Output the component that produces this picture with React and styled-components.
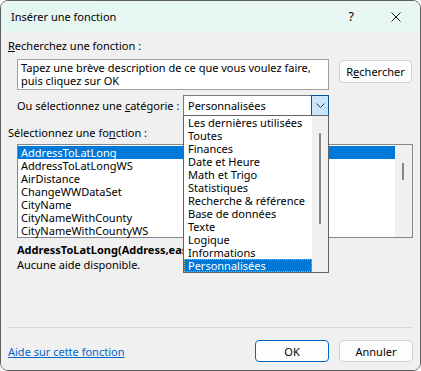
import React from "react";
import styled, { createGlobalStyle } from "styled-components";

const GlobalStyle = createGlobalStyle`
  html, body {
    margin: 0;
    padding: 0;
    background: #ffffff;
  }
  * {
    box-sizing: border-box;
  }
`;

const categories = [
  "Les dernières utilisées",
  "Toutes",
  "Finances",
  "Date et Heure",
  "Math et Trigo",
  "Statistiques",
  "Recherche & référence",
  "Base de données",
  "Texte",
  "Logique",
  "Informations",
  "Personnalisées",
];

const functions = [
  "AddressToLatLong",
  "AddressToLatLongWS",
  "AirDistance",
  "ChangeWWDataSet",
  "CityName",
  "CityNameWithCounty",
  "CityNameWithCountyWS",
];

export default function App() {
  return (
    <>
      <GlobalStyle />
      <Window>
        <TitleBar>
          <Title>Insérer une fonction</Title>
          <TitleButtons>
            <HelpGlyph>?</HelpGlyph>
            <CloseIcon viewBox="0 0 10 10">
              <path d="M0.5 0.5 L9.5 9.5 M9.5 0.5 L0.5 9.5" />
            </CloseIcon>
          </TitleButtons>
        </TitleBar>
        <Body>
          <Label>
            <Key>R</Key>echerchez une fonction :
          </Label>
          <SearchRow>
            <SearchBox>
              Tapez une brève description de ce que vous voulez faire,
              <br />
              puis cliquez sur OK
            </SearchBox>
            <Button>
              R<Key>e</Key>chercher
            </Button>
          </SearchRow>
          <CategoryRow>
            <CategoryLabel>
              Ou sélectionnez une <Key>c</Key>atégorie :
            </CategoryLabel>
            <Combo>
              <ComboText>Personnalisées</ComboText>
              <ComboButton>
                <svg width="9" height="5" viewBox="0 0 9 5">
                  <path d="M0.5 0.5 L4.5 4.5 L8.5 0.5" fill="none" stroke="#333" strokeWidth="1" />
                </svg>
              </ComboButton>
              <DropList>
                <DropItems>
                  {categories.map((c, i) => (
                    <DropItem key={c} $selected={i === categories.length - 1}>
                      {c}
                    </DropItem>
                  ))}
                </DropItems>
                <ScrollTrack>
                  <Thumb style={{ top: 17, height: 91 }} />
                </ScrollTrack>
              </DropList>
            </Combo>
          </CategoryRow>
          <FunctionLabel>
            Sélectionnez une fo<Key>n</Key>ction :
          </FunctionLabel>
          <FunctionList>
            <FunctionItems>
              {functions.map((f, i) => (
                <FunctionItem key={f} $selected={i === 0}>
                  {f}
                </FunctionItem>
              ))}
            </FunctionItems>
            <ScrollTrack $wide>
              <Thumb style={{ top: 18, height: 17 }} />
            </ScrollTrack>
          </FunctionList>
          <Signature>AddressToLatLong(Address,easyName)</Signature>
          <HelpText>Aucune aide disponible.</HelpText>
          <Spacer />
          <Separator />
          <Footer>
            <Link href="#">Aide sur cette fonction</Link>
            <FooterButtons>
              <Button $default $wide>OK</Button>
              <Button $wide>Annuler</Button>
            </FooterButtons>
          </Footer>
        </Body>
      </Window>
    </>
  );
}

const Window = styled.div`
  width: 421px;
  height: 371px;
  border: 1px solid #5f5f5f;
  border-radius: 8px;
  overflow: hidden;
  display: flex;
  flex-direction: column;
  font-family: "Noto Sans", sans-serif;
  font-size: 11px;
  color: #000;
`;

const TitleBar = styled.div`
  height: 31px;
  flex: 0 0 auto;
  display: flex;
  align-items: center;
  justify-content: space-between;
  padding: 0 19px 0 10px;
  background: linear-gradient(90deg, #e5f6f2 0%, #e9f7f3 100%);
`;

const Title = styled.span`
  font-size: 11px;
`;

const TitleButtons = styled.div`
  display: flex;
  align-items: center;
  gap: 37px;
`;

const HelpGlyph = styled.span`
  font-size: 12.5px;
`;

const CloseIcon = styled.svg`
  width: 10px;
  height: 10px;
  stroke: #1a1a1a;
  stroke-width: 1;
  fill: none;
`;

const Body = styled.div`
  flex: 1;
  display: flex;
  flex-direction: column;
  background: #f0f0f0;
  padding: 6px 7px 8px 7px;
`;

const Key = styled.span`
  text-decoration: underline;
`;

const Label = styled.div`
  line-height: 15px;
  height: 15px;
`;

const SearchRow = styled.div`
  display: flex;
  align-items: flex-start;
  gap: 10px;
  margin: 6px 0 0 9px;
`;

const SearchBox = styled.div`
  width: 312px;
  height: 31px;
  background: #fff;
  border: 1px solid #a0a0a0;
  padding: 1px 3px;
  line-height: 13px;
  white-space: nowrap;
`;

const Button = styled.button`
  width: ${({ $wide }) => ($wide ? "74px" : "73px")};
  height: ${({ $wide }) => ($wide ? "22px" : "23px")};
  margin-top: ${({ $wide }) => ($wide ? "0" : "1px")};
  padding: 0;
  font-family: inherit;
  font-size: 11px;
  color: #000;
  background: #fdfdfd;
  border: 1px solid ${({ $default }) => ($default ? "#0067c0" : "#d0d0d0")};
  border-radius: 4px;
`;

const CategoryRow = styled.div`
  display: flex;
  align-items: center;
  margin: 5px 0 0 9px;
  height: 21px;
`;

const CategoryLabel = styled.div`
  width: 166px;
  white-space: nowrap;
`;

const Combo = styled.div`
  position: relative;
  width: 146px;
  height: 21px;
  background: #fff;
  border: 1px solid #7a7a7a;
  display: flex;
  align-items: center;
`;

const ComboText = styled.span`
  flex: 1;
  padding-left: 4px;
`;

const ComboButton = styled.div`
  width: 18px;
  height: 21px;
  margin: -1px -1px -1px 0;
  background: #cce4f7;
  border: 1px solid #005499;
  display: flex;
  align-items: center;
  justify-content: center;
`;

const DropList = styled.div`
  position: absolute;
  top: 19px;
  left: -1px;
  width: 146px;
  height: 158px;
  background: #fff;
  border: 1px solid #646464;
  display: flex;
  z-index: 2;
`;

const DropItems = styled.div`
  flex: 1;
  display: flex;
  flex-direction: column;
`;

const DropItem = styled.div`
  height: 13px;
  line-height: 13px;
  padding-left: 4px;
  white-space: nowrap;
  background: ${({ $selected }) => ($selected ? "#0078d7" : "transparent")};
  color: ${({ $selected }) => ($selected ? "#fff" : "#000")};
  outline: ${({ $selected }) => ($selected ? "1px dotted #e8a040" : "none")};
  outline-offset: -1px;
`;

const ScrollTrack = styled.div`
  position: relative;
  width: ${({ $wide }) => ($wide ? "17px" : "16px")};
  background: #f0f0f0;
`;

const Thumb = styled.div`
  position: absolute;
  left: 7px;
  width: 2px;
  background: #858585;
`;

const FunctionLabel = styled.div`
  margin-top: 9px;
  line-height: 15px;
`;

const FunctionList = styled.div`
  margin: 4px 0 0 9px;
  height: 94px;
  background: #fff;
  border: 1px solid #828790;
  display: flex;
`;

const FunctionItems = styled.div`
  flex: 1;
  padding-top: 1px;
  display: flex;
  flex-direction: column;
`;

const FunctionItem = styled.div`
  height: 13px;
  line-height: 13px;
  padding-left: 3px;
  background: ${({ $selected }) => ($selected ? "#0078d7" : "transparent")};
  color: ${({ $selected }) => ($selected ? "#fff" : "#000")};
`;

const Signature = styled.div`
  margin: 4px 0 0 9px;
  width: 166px;
  overflow: hidden;
  line-height: 15px;
  font-weight: bold;
  white-space: nowrap;
`;

const HelpText = styled.div`
  margin-left: 9px;
  line-height: 16px;
`;

const Spacer = styled.div`
  flex: 1;
`;

const Separator = styled.div`
  height: 1px;
  background: #d9d9d9;
`;

const Footer = styled.div`
  margin-top: 12px;
  display: flex;
  align-items: center;
  justify-content: space-between;
  height: 22px;
`;

const Link = styled.a`
  color: #0066cc;
  text-decoration: underline;
`;

const FooterButtons = styled.div`
  display: flex;
  gap: 10px;
`;
